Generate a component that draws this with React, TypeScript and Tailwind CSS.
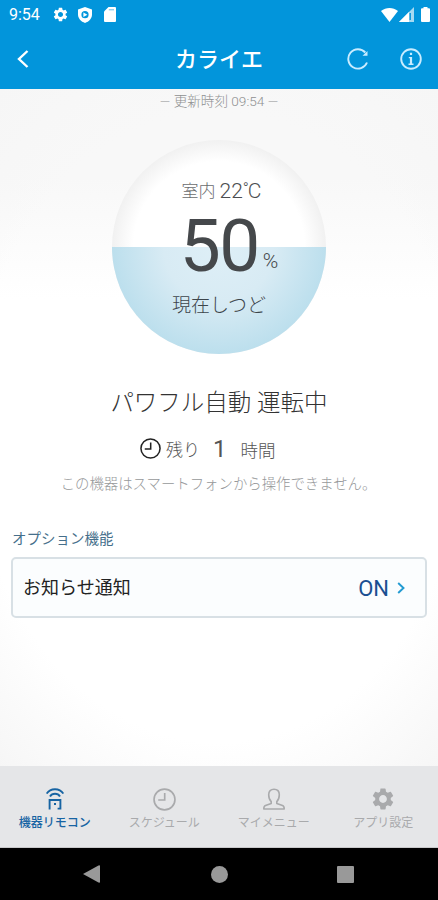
import React from 'react'
import { MdSettings } from 'react-icons/md'

type IconProps = { className?: string }

const ShieldIcon = ({ className }: IconProps) => (
    <svg viewBox="0 0 14 16" className={className}>
        <path fill="currentColor" d="M7 0 14 2.6V7.6C14 11.5 11 14.8 7 16 3 14.8 0 11.5 0 7.6V2.6Z" />
        <circle cx="7" cy="7.7" r="3.6" fill="#0295db" />
        <path fill="currentColor" d="M5.4 5.4v4.6l4-2.3Z" />
    </svg>
)

const SdIcon = ({ className }: IconProps) => (
    <svg viewBox="0 0 12 15" className={className}>
        <path fill="currentColor" d="M4.5 0H11a1 1 0 0 1 1 1v13a1 1 0 0 1-1 1H1a1 1 0 0 1-1-1V4.5Z" />
        <path stroke="#0295db" strokeWidth="1" d="M4.8 2.8H10" opacity=".6" />
    </svg>
)

const ClockIcon = ({ className }: IconProps) => (
    <svg viewBox="0 0 22 22" fill="none" stroke="currentColor" className={className}>
        <circle cx="11" cy="11" r="10" strokeWidth="1.6" />
        <path d="M11.2 4.8v6.7H5" strokeWidth="1.6" />
    </svg>
)

const RemoteIcon = ({ className }: IconProps) => (
    <svg viewBox="0 0 18 22" fill="none" stroke="currentColor" strokeWidth="1.9" className={className}>
        <path d="M.7 5.6C4.3-.3 13.7-.3 17.3 5.6" />
        <path d="M4 8.4C6.2 4.8 11.8 4.8 14 8.4" />
        <path d="M3.6 21.5V12H14.4V20.6H11.6" />
        <path d="M8 15.9H10" strokeWidth="2" />
    </svg>
)

const UserIcon = ({ className }: IconProps) => (
    <svg viewBox="0 0 22 22" fill="none" stroke="currentColor" strokeWidth="1.6" strokeLinejoin="round" className={className}>
        <path d="M8.2 13.6C6.3 11.8 5.7 9.3 5.7 6.7 5.7 3.2 7.8 1.2 11 1.2s5.3 2 5.3 5.5c0 2.6-.6 5.1-2.5 6.9v2l5.7 2c1.2.4 1.7 1.5 1.7 3.4H.8c0-1.9.5-3 1.7-3.4l5.7-2Z" />
    </svg>
)

const tabs = [
    { name: '機器リモコン', icon: <RemoteIcon className="h-[22px] w-[18px]" />, active: true },
    { name: 'スケジュール', icon: <ClockIcon className="size-[23px]" /> },
    { name: 'マイメニュー', icon: <UserIcon className="size-[22px]" /> },
    { name: 'アプリ設定', icon: <MdSettings className="size-[26px]" /> },
]

const Header = () => (
    <header className="h-[89px] bg-[#0295db] text-white">
        <div className="flex h-[29px] items-center pl-[9px] pr-[8px]">
            <span className="w-[43px] text-[16px] leading-7">9:54</span>
            <MdSettings className="size-[17px]" />
            <ShieldIcon className="ml-[9px] h-4 w-[14px]" />
            <SdIcon className="ml-[12px] h-[15px] w-[12px]" />
            <svg viewBox="0 0 17 14" className="ml-auto h-[14px] w-[17px]">
                <path fill="currentColor" d="M0 3C5-1 12-1 17 3L8.5 14Z" />
            </svg>
            <svg viewBox="0 0 15 15" className="ml-[1px] h-[15px] w-[15px]">
                <path fill="currentColor" opacity=".65" d="M0 15 15 0V15Z" />
                <path fill="currentColor" d="M0 15 10 5V15Z" />
                <path fill="#0295db" d="M10.500 6h1.400v7h-1.400Z" />
            </svg>
            <svg viewBox="0 0 9 15" className="ml-[7px] h-[15px] w-[9px]">
                <path fill="currentColor" d="M2.5 0h4v1.3H8a1 1 0 0 1 1 1V14a1 1 0 0 1-1 1H1a1 1 0 0 1-1-1V2.3a1 1 0 0 1 1-1h1.5Z" />
            </svg>
        </div>
        <div className="grid h-[60px] grid-cols-[80px_1fr_80px] items-center">
            <button aria-label="戻る" className="pl-[17px]">
                <svg viewBox="0 0 12 18" fill="none" stroke="currentColor" strokeWidth="2.4" className="h-[18px] w-[12px]">
                    <path d="M10.5 1 2 9l8.5 8" />
                </svg>
            </button>
            <h1 className="pt-px text-center text-[22px] font-medium leading-8">カライエ</h1>
            <div className="flex items-center justify-end gap-[31px] pr-[16px] text-[#c9ecff]">
                <svg viewBox="0 0 22 22" fill="none" stroke="currentColor" className="size-[22px] shrink-0">
                    <path strokeWidth="1.9" d="M20 14.5A9.7 9.7 0 1 1 18.3 4.5" />
                    <path fill="currentColor" stroke="none" d="M15.500 7.800H20.500V3Z" />
                </svg>
                <svg viewBox="0 0 22 22" fill="none" stroke="currentColor" className="size-[22px] shrink-0">
                    <circle cx="11" cy="11" r="9.8" strokeWidth="1.9" />
                    <path strokeWidth="2.2" d="M11 4.8v2.2M11 9v7.5" />
                    <path strokeWidth="1.4" d="M8.8 9.6H11M8.5 16.2h5" />
                </svg>
            </div>
        </div>
    </header>
)

const HumidityGauge = () => (
    <div className="relative mx-auto mt-[26px] flex h-[214px] w-[214px] flex-col items-center overflow-hidden rounded-full bg-[radial-gradient(closest-side,#ffffff_80%,#f1f1f1_100%)]">
        <div className="absolute inset-x-0 bottom-0 h-[107px] bg-[radial-gradient(circle_at_50%_0%,#deeff7_0,#d8ebf4_55px,#bcdfed_107px)]" />
        <p className="relative mt-[37px] flex h-[30px] items-center pl-[5px] text-[21px] font-light text-[#4b4d50]">
            <span className="mr-[4px] text-[17px] text-[#6a6c6e]">室内</span>22<span className="-mr-px self-start text-[16px] leading-[24px]">°</span>C
        </p>
        <p className="relative ml-[20px] flex h-[77px] items-end text-[#45484b]">
            <span className="text-[73px] leading-[76px] tracking-[-1.5px]">50</span>
            <span className="mb-[11px] ml-[4px] text-[21px] font-light leading-[24px]">%</span>
        </p>
        <p className="relative mt-[6px] text-[19px] font-light leading-[32px] text-[#3d454b]">現在しつど</p>
    </div>
)

const TabBar = () => (
    <nav className="grid h-[82px] grid-cols-4 border-b border-[#c8c8ca] bg-[#e5e6e8]">
        {tabs.map((tab) => (
            <button
                key={tab.name}
                className={tab.active ? 'flex flex-col items-center pt-[20px] font-medium text-[#1764a3]' : 'flex flex-col items-center pt-[20px] text-[#a9aaac]'}>
                <span className="flex h-[26px] items-center">{tab.icon}</span>
                <span className="mt-px whitespace-nowrap text-[12px] leading-[20px]">{tab.name}</span>
            </button>
        ))}
    </nav>
)

export default function App() {
    return (
        <div className="flex h-[900px] w-[438px] flex-col overflow-hidden font-[Roboto,'Noto_Sans_CJK_JP',sans-serif]">
            <Header />
            <main className="flex h-[677px] flex-col bg-[radial-gradient(ellipse_75%_62%_at_50%_50%,#ffffff00_75%,#f6f6f6_105%),linear-gradient(to_bottom,#f8f8f8_0,#f8f8f8_90px,#ffffff_210px)]">
                <p className="mt-px h-[24px] text-center text-[13.6px] font-light leading-[22px] text-[#8f9091]">— 更新時刻 09:54 —</p>
                <HumidityGauge />
                <h2 className="mt-[32px] text-center text-[23.5px] font-light leading-[34px] text-[#333]">パワフル自動 運転中</h2>
                <div className="mt-[13px] flex h-[36px] items-center pl-[140px] text-[#555]">
                    <ClockIcon className="mb-[5px] size-[21px] text-[#222]" />
                    <span className="ml-[5px] text-[17px] font-light">残り</span>
                    <span className="mb-[4px] ml-[13px] text-[24px]">1</span>
                    <span className="ml-[14px] text-[17.5px] font-light">時間</span>
                </div>
                <p className="mt-[4px] pr-px text-center text-[14.4px] font-light leading-[24px] text-[#96989a]">この機器はスマートフォンから操作できません。</p>
                <section className="mt-[29px] px-[11px]">
                    <h3 className="h-[30px] pl-px text-[14.5px] leading-[27px] text-[#466f8b]">オプション機能</h3>
                    <button className="mt-px flex h-[61px] w-full items-center rounded-[5px] border-2 border-[#d8e0e5] bg-[#fbfdfe] pl-[10px] pr-[20px]">
                        <span className="text-[18px] text-[#222]">お知らせ通知</span>
                        <span className="ml-auto pt-px text-[22px] text-[#1a4f91]">ON</span>
                        <svg viewBox="0 0 8 12" fill="none" stroke="#239bd2" strokeWidth="1.9" className="ml-[8px] h-[12px] w-[8px]">
                            <path d="M1.2 1 6.5 6l-5.3 5" />
                        </svg>
                    </button>
                </section>
            </main>
            <TabBar />
            <footer className="flex h-[52px] items-center justify-between bg-black pl-[83px] pr-[84px]">
                <svg viewBox="0 0 18 18" className="size-[18px]">
                    <path fill="#999" d="M0 9 15.5.5Q17 0 17 1V17Q17 18 15.5 17.5Z" />
                </svg>
                <span className="size-[17px] rounded-full bg-[#999]" />
                <span className="size-[17px] rounded-[1px] bg-[#999]" />
            </footer>
        </div>
    )
}
